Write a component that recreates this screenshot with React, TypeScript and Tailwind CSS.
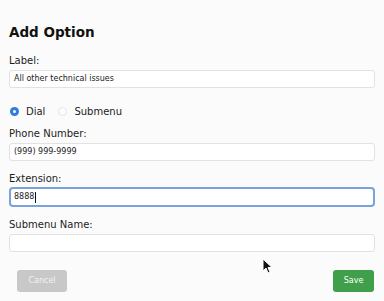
import React from "react";

const font = { fontFamily: '"DejaVu Sans", Verdana, sans-serif' };

function Field({ label, value, focused, mt }: { label: string; value?: string; focused?: boolean; mt: string }) {
  return (
    <div className={mt}>
      <div className="text-[10px] leading-[15px] text-[#1c1c1c]">{label}</div>
      {focused ? (
        <div className="mt-[1px] h-[20px] rounded-[4px] border-2 border-[#7aa3dd] bg-white pl-[3px] flex items-center text-[8px] text-[#222]">
          <span>{value}</span>
          <span className="ml-[1px] inline-block h-[11px] w-[1px] bg-[#111]" />
        </div>
      ) : (
        <div className="mt-[2px] h-[18px] rounded-[3px] border border-[#e2e2e2] bg-white pl-[4px] flex items-center text-[8px] text-[#222]">
          {value}
        </div>
      )}
    </div>
  );
}

export default function App() {
  return (
    <div className="relative w-[384px] h-[301px] bg-[#fbfbfb] px-[9px] pt-[22px] overflow-hidden" style={font}>
      <div className="text-[13.5px] leading-[20px] font-bold text-[#111]">Add Option</div>
      <Field mt="mt-[11px]" label="Label:" value="All other technical issues" />
      <div className="mt-[16px] h-[15px] flex items-center text-[10px] leading-[15px] text-[#1c1c1c]">
        <span className="ml-[1px] inline-flex h-[9px] w-[9px] items-center justify-center rounded-full bg-[#2f7ae5]">
          <span className="h-[3px] w-[3px] rounded-full bg-white" />
        </span>
        <span className="ml-[7px]">Dial</span>
        <span className="ml-[13px] inline-block h-[9px] w-[9px] rounded-full border border-[#e6e6e6] bg-[#fdfdfd]" />
        <span className="ml-[7px]">Submenu</span>
      </div>
      <Field mt="mt-[7px]" label="Phone Number:" value="(999) 999-9999" />
      <Field mt="mt-[10px]" label="Extension:" value="8888" focused />
      <Field mt="mt-[10px]" label="Submenu Name:" value="" />
      <div className="mt-[18px] flex justify-between pl-[8px] pr-[1px]">
        <div className="h-[22px] w-[50px] rounded-[3px] bg-[#c8c8c8] flex items-center justify-center text-[8px] text-[#f2f2f2]">
          Cancel
        </div>
        <div className="h-[22px] w-[41px] rounded-[3px] bg-[#3f9f4a] flex items-center justify-center text-[8px] text-white">
          Save
        </div>
      </div>
      <svg className="absolute left-[262px] top-[258px]" width="11" height="16" viewBox="0 0 11 16">
        <path d="M1 1 L1 13 L4 10 L6 15 L8 14 L6 9.5 L10 9.5 Z" fill="#111" stroke="#fff" strokeWidth="1" strokeLinejoin="round" />
      </svg>
    </div>
  );
}
